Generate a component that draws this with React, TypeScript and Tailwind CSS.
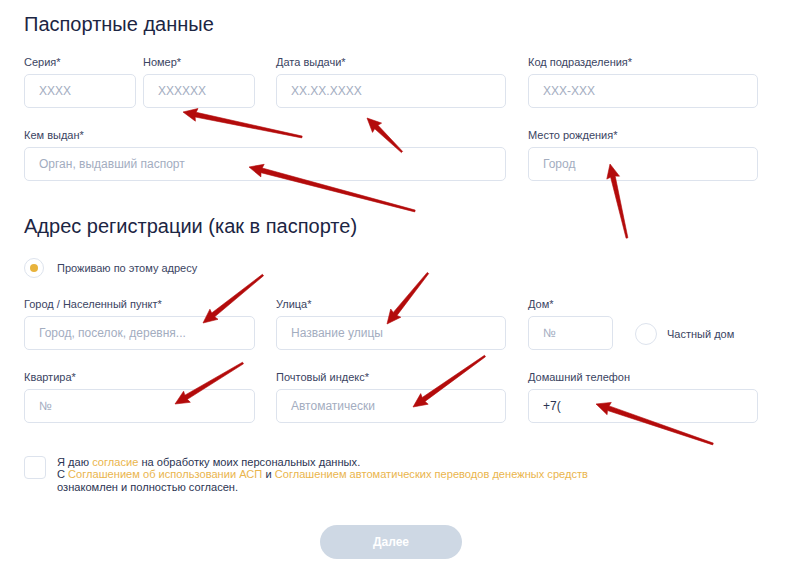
import React from "react";

type Arrow = [number, number, number, number]; // tailX, tailY, tipX, tipY

const arrows: Arrow[] = [
  [302, 137, 183, 112],
  [402, 152, 367, 118],
  [415, 211, 249, 167],
  [627, 238, 610, 164],
  [263, 275, 203, 323],
  [428, 273, 387, 324],
  [243, 363, 175, 404],
  [485, 356, 413, 407],
  [713, 444, 596, 404],
];

function arrowPoints([tx, ty, hx, hy]: Arrow): string {
  const dx = hx - tx;
  const dy = hy - ty;
  const len = Math.sqrt(dx * dx + dy * dy);
  const ux = dx / len;
  const uy = dy / len;
  const nx = -uy;
  const ny = ux;
  const headLen = 13;
  const headHalf = 6.5;
  const tailHalf = 0.9;
  const neckHalf = 2.4;
  const bx = hx - ux * headLen;
  const by = hy - uy * headLen;
  const pts: [number, number][] = [
    [tx + nx * tailHalf, ty + ny * tailHalf],
    [bx + nx * neckHalf, by + ny * neckHalf],
    [bx + nx * headHalf - ux * 1, by + ny * headHalf - uy * 1],
    [hx, hy],
    [bx - nx * headHalf - ux * 1, by - ny * headHalf - uy * 1],
    [bx - nx * neckHalf, by - ny * neckHalf],
    [tx - nx * tailHalf, ty - ny * tailHalf],
  ];
  return pts.map((p) => `${p[0].toFixed(1)},${p[1].toFixed(1)}`).join(" ");
}

function Field({
  label,
  placeholder,
  value,
  className,
}: {
  label: string;
  placeholder?: string;
  value?: string;
  className: string;
}) {
  return (
    <div className={className}>
      <div className="text-[11px] leading-[13px] text-[#3a4462] whitespace-nowrap">{label}</div>
      <div className="mt-[5px] h-[34px] rounded-[5px] border border-[#dde3ed] bg-white flex items-center pl-[14px]">
        {value ? (
          <span className="text-[12px] text-[#2b3452]">{value}</span>
        ) : (
          <span className="text-[12px] text-[#a3adbf] whitespace-nowrap">{placeholder}</span>
        )}
      </div>
    </div>
  );
}

export default function App() {
  return (
    <div className="relative w-[800px] h-[573px] bg-white overflow-hidden font-['Liberation_Sans',Arial,sans-serif]">
      <div className="pl-6 pt-3">
        <h1 className="text-[20px] leading-6 h-6 text-[#1c2543] font-normal">Паспортные данные</h1>

        <div className="flex mt-5">
          <Field label="Серия*" placeholder="XXXX" className="w-[112px]" />
          <Field label="Номер*" placeholder="XXXXXX" className="ml-[7px] w-[112px]" />
          <Field label="Дата выдачи*" placeholder="XX.XX.XXXX" className="ml-[21px] w-[230px]" />
          <Field label="Код подразделения*" placeholder="XXX-XXX" className="ml-[22px] w-[230px]" />
        </div>

        <div className="flex mt-[21px]">
          <Field label="Кем выдан*" placeholder="Орган, выдавший паспорт" className="w-[482px]" />
          <Field label="Место рождения*" placeholder="Город" className="ml-[22px] w-[230px]" />
        </div>

        <h2 className="mt-[33px] text-[20px] leading-6 h-6 text-[#1c2543] font-normal">
          Адрес регистрации (как в паспорте)
        </h2>

        <div className="mt-5 flex items-center h-5">
          <div className="w-5 h-5 rounded-full border border-[#dde3ed] flex items-center justify-center">
            <div className="w-[8px] h-[8px] rounded-full bg-[#e8b33c]" />
          </div>
          <span className="ml-[13px] text-[11px] text-[#3a4462]">Проживаю по этому адресу</span>
        </div>

        <div className="flex mt-5">
          <Field label="Город / Населенный пункт*" placeholder="Город, поселок, деревня..." className="w-[231px]" />
          <Field label="Улица*" placeholder="Название улицы" className="ml-[21px] w-[230px]" />
          <Field label="Дом*" placeholder="№" className="ml-[22px] w-[85px]" />
          <div className="ml-[22px] mt-[25px] flex items-center h-[22px]">
            <div className="w-[22px] h-[22px] rounded-full border border-[#dde3ed]" />
            <span className="ml-[10px] text-[11px] text-[#3a4462]">Частный дом</span>
          </div>
        </div>

        <div className="flex mt-[21px]">
          <Field label="Квартира*" placeholder="№" className="w-[231px]" />
          <Field label="Почтовый индекс*" placeholder="Автоматически" className="ml-[21px] w-[230px]" />
          <Field label="Домашний телефон" value="+7(" className="ml-[22px] w-[230px]" />
        </div>

        <div className="flex mt-[33px]">
          <div className="w-[22px] h-[23px] rounded-[4px] border border-[#dde3ed] shrink-0" />
          <div className="ml-[11px] text-[11.1px] leading-[12.3px] text-[#2b3452]">
            <div>
              Я даю <span className="text-[#eab54d]">согласие</span> на обработку моих персональных данных.
            </div>
            <div>
              С <span className="text-[#eab54d]">Соглашением об использовании АСП</span> и{" "}
              <span className="text-[#eab54d]">Соглашением автоматических переводов денежных средств</span>
            </div>
            <div>ознакомлен и полностью согласен.</div>
          </div>
        </div>

        <div className="mt-[32px] pl-[296px]">
          <div className="w-[142px] h-[34px] rounded-full bg-[#ced8e4] flex items-center justify-center text-white text-[12px] font-bold">
            Далее
          </div>
        </div>
      </div>

      <svg className="absolute inset-0 pointer-events-none" width="800" height="573" viewBox="0 0 800 573">
        {arrows.map((a, i) => (
          <polygon key={i} points={arrowPoints(a)} fill="#b30b0b" strokeLinejoin="round" stroke="#b30b0b" strokeWidth="0.6" />
        ))}
      </svg>
    </div>
  );
}
